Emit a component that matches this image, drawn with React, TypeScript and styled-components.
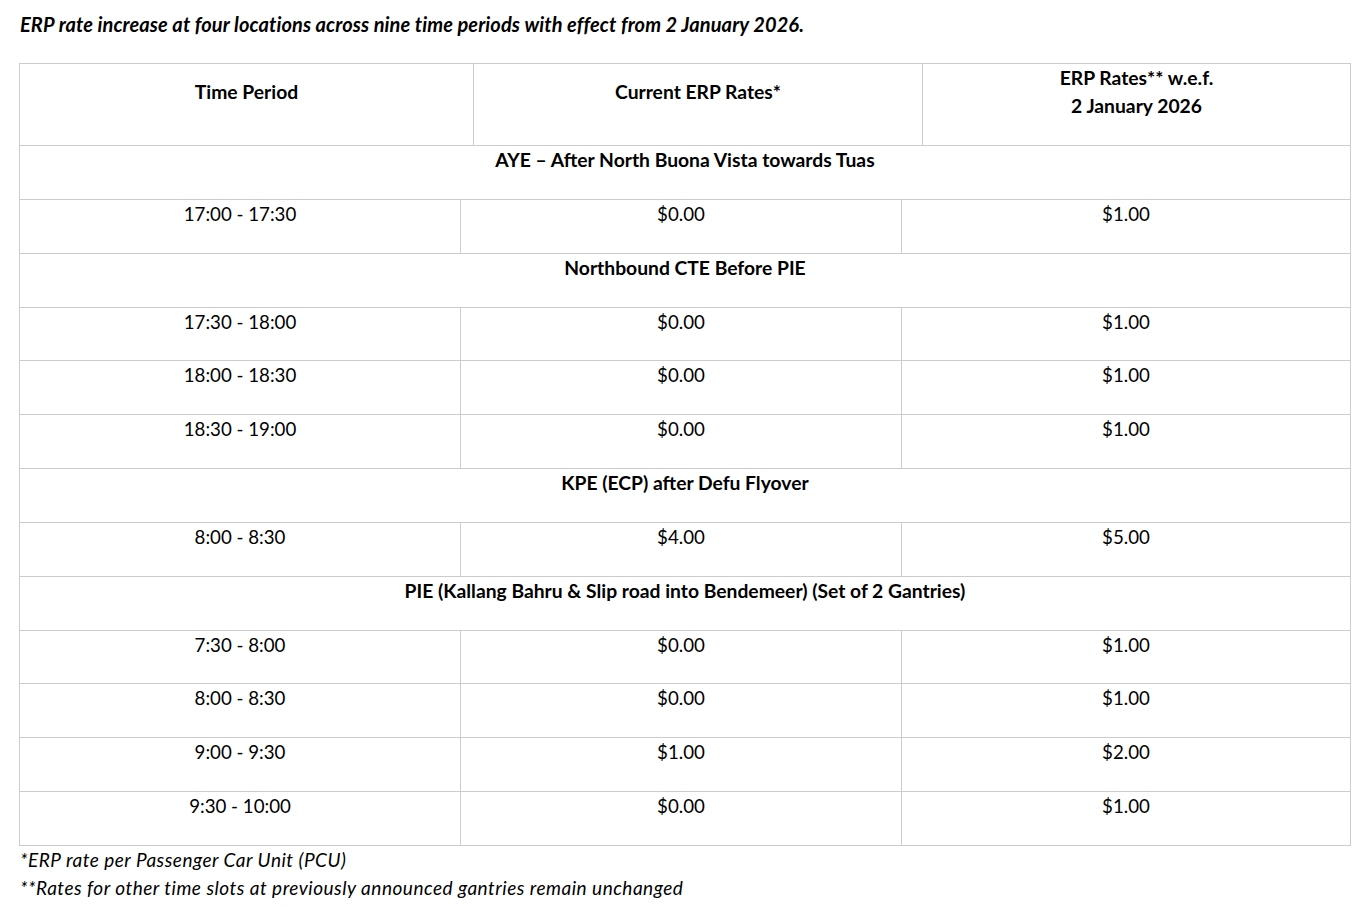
import styled, { createGlobalStyle } from "styled-components";

const GlobalStyle = createGlobalStyle`
  html, body, #root {
    margin: 0;
    padding: 0;
    background: #fff;
  }
  body {
    font-family: Lato, "Open Sans", Arial, sans-serif;
    color: #000;
  }
`;

const Page = styled.div`
  padding: 10px 15px 0 19px;
`;

const Title = styled.p`
  margin: 0 0 25px 1px;
  font-size: 20px;
  line-height: 28px;
  letter-spacing: 0.1px;
  font-weight: 700;
  font-style: italic;
`;

const Table = styled.div`
  width: 1332px;
  border: 1px solid #ccc;
  border-bottom: none;
  box-sizing: border-box;
`;

const Row = styled.div<{ $cols: string; $height: number }>`
  display: grid;
  grid-template-columns: ${(p) => p.$cols};
  height: ${(p) => p.$height}px;
  border-bottom: 1px solid #ccc;
  box-sizing: border-box;
`;

const Cell = styled.div<{ $bold?: boolean; $middle?: boolean }>`
  display: flex;
  flex-direction: column;
  align-items: center;
  justify-content: ${(p) => (p.$middle ? "center" : "flex-start")};
  padding: ${(p) => (p.$middle ? "0 0 26px" : "0")};
  font-size: ${(p) => (p.$bold ? "19.3px" : "18.7px")};
  line-height: 28px;
  font-weight: ${(p) => (p.$bold ? 700 : 400)};
  text-align: center;
  white-space: nowrap;
  border-right: 1px solid #ccc;
  box-sizing: border-box;

  &:last-child {
    border-right: none;
  }
`;

const SectionCell = styled(Cell)`
  grid-column: 1 / -1;
`;

const Note = styled.p`
  margin: 0 0 0 1px;
  font-size: 19px;
  line-height: 28px;
  letter-spacing: 0.5px;
  font-style: italic;
`;

const HEAD_COLS = "454px 449px 1fr";
const BODY_COLS = "441px 441px 1fr";
const ROW_H = 53.85;

type Section = {
  name: string;
  rows: [string, string, string][];
};

const SECTIONS: Section[] = [
  {
    name: "AYE – After North Buona Vista towards Tuas",
    rows: [["17:00 - 17:30", "$0.00", "$1.00"]],
  },
  {
    name: "Northbound CTE Before PIE",
    rows: [
      ["17:30 - 18:00", "$0.00", "$1.00"],
      ["18:00 - 18:30", "$0.00", "$1.00"],
      ["18:30 - 19:00", "$0.00", "$1.00"],
    ],
  },
  {
    name: "KPE (ECP) after Defu Flyover",
    rows: [["8:00 - 8:30", "$4.00", "$5.00"]],
  },
  {
    name: "PIE (Kallang Bahru & Slip road into Bendemeer) (Set of 2 Gantries)",
    rows: [
      ["7:30 - 8:00", "$0.00", "$1.00"],
      ["8:00 - 8:30", "$0.00", "$1.00"],
      ["9:00 - 9:30", "$1.00", "$2.00"],
      ["9:30 - 10:00", "$0.00", "$1.00"],
    ],
  },
];

export default function App() {
  return (
    <Page>
      <GlobalStyle />
      <Title>
        ERP rate increase at four locations across nine time periods with effect from 2 January 2026.
      </Title>
      <Table>
        <Row $cols={HEAD_COLS} $height={82}>
          <Cell $bold $middle>Time Period</Cell>
          <Cell $bold $middle>Current ERP Rates*</Cell>
          <Cell $bold $middle>
            <span>ERP Rates** w.e.f.</span>
            <span>2 January 2026</span>
          </Cell>
        </Row>
        {SECTIONS.map((s) => (
          <div key={s.name}>
            <Row $cols="1fr" $height={ROW_H}>
              <SectionCell $bold>{s.name}</SectionCell>
            </Row>
            {s.rows.map((r, i) => (
              <Row key={i} $cols={BODY_COLS} $height={ROW_H}>
                {r.map((v, j) => (
                  <Cell key={j}>{v}</Cell>
                ))}
              </Row>
            ))}
          </div>
        ))}
      </Table>
      <Note>*ERP rate per Passenger Car Unit (PCU)</Note>
      <Note>**Rates for other time slots at previously announced gantries remain unchanged</Note>
    </Page>
  );
}
